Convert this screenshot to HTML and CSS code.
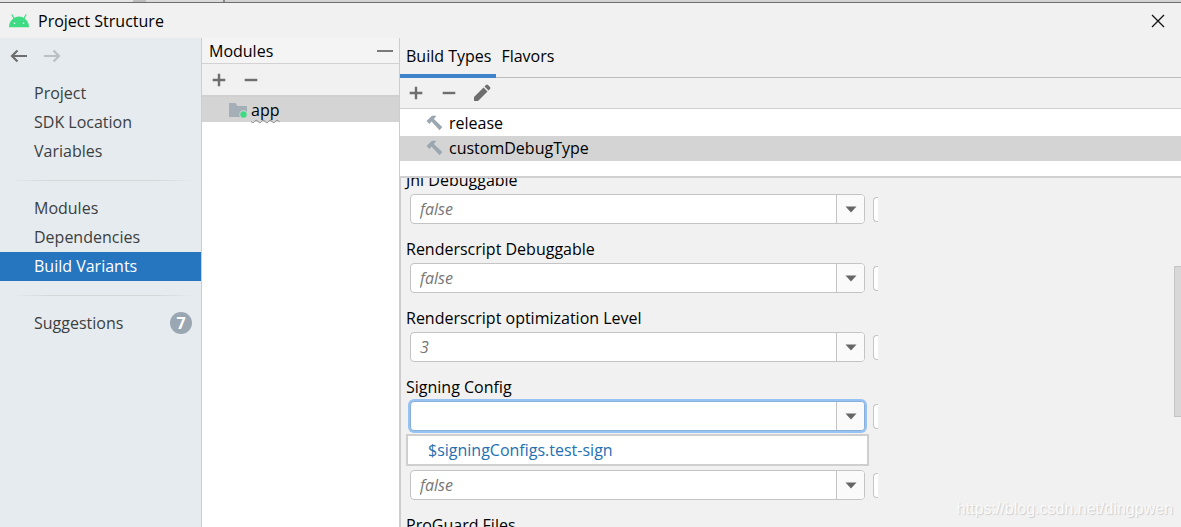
FILE: index.html
```html
<!DOCTYPE html>
<html lang="en">
<head>
<meta charset="utf-8">
<title>Project Structure</title>
<link rel="stylesheet" href="styles.css">
</head>
<body>
<div class="backdrop"></div>
<div class="dialog">
  <header class="titlebar">
    <svg class="logo" width="22" height="14" viewBox="0 0 22 14"><path d="M6 4.500 4 .8M16 4.500l2-3.700" stroke="#3ddc84" stroke-width="1.200" stroke-linecap="round"/><path d="M1 13.200C1 7.500 5.500 2.500 11 2.500S21 7.500 21 13.200z" fill="#3ddc84"/><circle cx="6.500" cy="9.200" r=".8" fill="#fff"/><circle cx="15.500" cy="9.200" r=".8" fill="#fff"/></svg>
    <h1 class="title">Project Structure</h1>
    <button class="icon-button close" aria-label="Close"><svg width="14" height="14" viewBox="0 0 14 14"><path d="M1 1l12 12M13 1 1 13" stroke="#111" stroke-width="1.300"/></svg></button>
  </header>
  <div class="content">
    <nav class="sidebar">
      <div class="history">
        <button class="icon-button" aria-label="Back"><svg width="18" height="14" viewBox="0 0 18 14"><path d="M17 7H2.500M7.500 1.500 2 7l5.500 5.500" fill="none" stroke="#6e6e6e" stroke-width="2.200"/></svg></button>
        <button class="icon-button" aria-label="Forward" disabled><svg width="18" height="14" viewBox="0 0 18 14"><path d="M1 7h14.500M10.500 1.500 16 7l-5.500 5.500" fill="none" stroke="#bcbfc1" stroke-width="2.200"/></svg></button>
      </div>
      <a class="nav-item" href="#project">Project</a>
      <a class="nav-item" href="#sdk">SDK Location</a>
      <a class="nav-item" href="#variables">Variables</a>
      <hr class="divider">
      <a class="nav-item" href="#modules">Modules</a>
      <a class="nav-item" href="#dependencies">Dependencies</a>
      <a class="nav-item selected" href="#variants">Build Variants</a>
      <hr class="divider">
      <a class="nav-item" href="#suggestions">Suggestions <span class="badge">7</span></a>
    </nav>
    <section class="modules">
      <header class="modules-header">
        <h2 class="panel-title">Modules</h2>
        <button class="icon-button" aria-label="Hide"><svg width="16" height="4" viewBox="0 0 16 4"><path d="M0 2h16" stroke="#7a7a7a" stroke-width="2"/></svg></button>
      </header>
      <div class="toolbar modules-toolbar">
        <button class="icon-button" aria-label="Add module"><svg width="14" height="14" viewBox="0 0 14 14"><path d="M7 .7v12.600M.7 7h12.600" stroke="#6e6e6e" stroke-width="2.400"/></svg></button>
        <button class="icon-button" aria-label="Remove module"><svg width="14" height="14" viewBox="0 0 14 14"><path d="M.7 7h12.600" stroke="#6e6e6e" stroke-width="2.400"/></svg></button>
      </div>
      <ul class="list module-list">
        <li class="row module-row selected-row">
          <svg width="20" height="16" viewBox="0 0 20 16"><path d="M1 1h6.500l2 3H19v11H1z" fill="#a4afb7"/><circle cx="15.500" cy="12.500" r="4.200" fill="#d4d4d4"/><circle cx="15.500" cy="12.500" r="3.200" fill="#3ddc84"/></svg>
          <span class="warned">app</span>
        </li>
      </ul>
    </section>
    <main class="variants">
      <div class="tabs" role="tablist">
        <button class="tab active" role="tab" aria-selected="true">Build Types</button>
        <button class="tab" role="tab" aria-selected="false">Flavors</button>
      </div>
      <div class="toolbar types-toolbar">
        <button class="icon-button" aria-label="Add"><svg width="14" height="14" viewBox="0 0 14 14"><path d="M7 .7v12.600M.7 7h12.600" stroke="#6e6e6e" stroke-width="2.400"/></svg></button>
        <button class="icon-button" aria-label="Remove"><svg width="14" height="14" viewBox="0 0 14 14"><path d="M.7 7h12.600" stroke="#6e6e6e" stroke-width="2.400"/></svg></button>
        <button class="icon-button" aria-label="Rename"><svg width="18" height="18" viewBox="0 0 18 18"><path d="M1 17v-4L10.500 3.500l4 4L5 17zM11.500 2.500l1.500-1.500q1-.8 2 0l2 2q.8 1 0 2l-1.500 1.500z" fill="#6e6e6e"/></svg></button>
      </div>
      <ul class="list type-list">
        <li class="row"><svg width="17" height="16" viewBox="0 0 17 16"><path d="M.5 6 6 .8h4.500L7.800 4l8.500 8-2.800 3.200L5.500 6.500 3.500 9z" fill="#9aa7b0"/></svg>release</li>
        <li class="row selected-row"><svg width="17" height="16" viewBox="0 0 17 16"><path d="M.5 6 6 .8h4.500L7.800 4l8.500 8-2.800 3.200L5.500 6.500 3.500 9z" fill="#9aa7b0"/></svg>customDebugType</li>
      </ul>
      <form class="properties">
        <div class="fields">
          <label class="field-label" for="jni">Jni Debuggable</label>
          <div class="field">
            <div class="combo"><input class="combo-input" id="jni" value="false"><button class="combo-button" type="button" aria-label="Open"><svg width="12" height="7" viewBox="0 0 12 7"><path d="M.5.5h11L6 6.500z" fill="#666"/></svg></button></div>
            <span class="clipped"></span>
          </div>
          <label class="field-label" for="rs">Renderscript Debuggable</label>
          <div class="field">
            <div class="combo"><input class="combo-input" id="rs" value="false"><button class="combo-button" type="button" aria-label="Open"><svg width="12" height="7" viewBox="0 0 12 7"><path d="M.5.5h11L6 6.500z" fill="#666"/></svg></button></div>
            <span class="clipped"></span>
          </div>
          <label class="field-label" for="level">Renderscript optimization Level</label>
          <div class="field">
            <div class="combo"><input class="combo-input" id="level" value="3"><button class="combo-button" type="button" aria-label="Open"><svg width="12" height="7" viewBox="0 0 12 7"><path d="M.5.5h11L6 6.500z" fill="#666"/></svg></button></div>
            <span class="clipped"></span>
          </div>
          <label class="field-label" for="signing">Signing Config</label>
          <div class="field with-popup">
            <div class="combo focused"><input class="combo-input" id="signing" value=""><button class="combo-button" type="button" aria-label="Open"><svg width="12" height="7" viewBox="0 0 12 7"><path d="M.5.5h11L6 6.500z" fill="#666"/></svg></button></div>
            <span class="clipped"></span>
          </div>
          <ul class="list popup" role="listbox"><li role="option">$signingConfigs.test-sign</li></ul>
          <div class="field">
            <div class="combo"><input class="combo-input" aria-label="Value" value="false"><button class="combo-button" type="button" aria-label="Open"><svg width="12" height="7" viewBox="0 0 12 7"><path d="M.5.5h11L6 6.500z" fill="#666"/></svg></button></div>
            <span class="clipped"></span>
          </div>
          <span class="field-label">ProGuard Files</span>
        </div>
        <div class="scroll-thumb"></div>
        <div class="watermark">https://blog.csdn.net/dingpwen</div>
      </form>
    </main>
  </div>
</div>
</body>
</html>
```
FILE: styles.css
```css
* { box-sizing: border-box; }
body {
  margin: 0;
  height: 100vh;
  display: flex;
  flex-direction: column;
  overflow: hidden;
  background: #f1f1f1;
  color: #000;
  font: 16px/24px "Open Sans", "Noto Sans", sans-serif;
}
button, input { font: inherit; color: inherit; }
svg { display: block; flex: none; }
.backdrop {
  flex: none;
  height: 2px;
  background: linear-gradient(90deg, #e4e4e4 133px, #bdbdbd 133px, #bdbdbd 146px, #dadada 146px, #dadada 223px, #8a8a8a 223px, #8a8a8a 225px, #d2d2d2 225px);
}
.dialog {
  flex: 1;
  min-height: 0;
  display: flex;
  flex-direction: column;
  border-top: 1px solid #6e6e6e;
}
.icon-button { padding: 0; border: 0; background: none; }
.titlebar {
  flex: none;
  height: 35px;
  display: flex;
  align-items: center;
  gap: 8px;
  padding: 0 16px 0 8px;
}
.title, .panel-title { margin: 0; font-size: 16px; font-weight: 400; }
.close { margin-left: auto; }
.content {
  flex: 1;
  min-height: 0;
  display: grid;
  grid-template-columns: 202px 198px minmax(0, 1fr);
}
.sidebar { background: #e6ebef; border-right: 1px solid #cbcdcf; }
.history { display: flex; gap: 15px; padding: 11px 0 0 10px; height: 41px; }
.history .icon-button { height: 14px; }
.nav-item {
  display: flex;
  align-items: center;
  justify-content: space-between;
  height: 29px;
  padding: 0 9px 1px 34px;
  color: #3c3f41;
  text-decoration: none;
}
.nav-item.selected { background: #2675bf; color: #fff; }
.divider {
  height: 1px;
  margin: 14px 6px 13px 10px;
  border: 0;
  background: linear-gradient(90deg, transparent, #d6d8d8 20%, #d6d8d8 80%, transparent);
}
.badge {
  width: 22px;
  height: 22px;
  border-radius: 50%;
  background: #9aa7b3;
  color: #fff;
  font-weight: 700;
  line-height: 22px;
  text-align: center;
}
.modules {
  display: flex;
  flex-direction: column;
  border-right: 1px solid #cdcdcd;
}
.modules-header {
  height: 26px;
  display: flex;
  align-items: center;
  justify-content: space-between;
  padding: 0 6px 0 7px;
  background: #f4f4f4;
  border-bottom: 1px solid #d2d2d2;
}
.toolbar { display: flex; align-items: center; }
.modules-toolbar { height: 33px; gap: 18px; padding-left: 10px; border-bottom: 2px solid #d0d0d0; }
.list { margin: 0; padding: 0; list-style: none; }
.module-list { flex: 1; background: #fff; }
.row { display: flex; align-items: center; gap: 6px; height: 25px; padding: 0 0 2px 26px; }
.module-row { gap: 3px; padding-bottom: 0; }
.selected-row { background: #d4d4d4; }
.warned { text-decoration: underline wavy #888 1px; text-underline-offset: 3px; text-decoration-skip-ink: none; }
.variants { display: flex; flex-direction: column; min-height: 0; }
.tabs { flex: none; display: flex; height: 40px; border-bottom: 1px solid #bdbdbd; }
.tab { height: 40px; padding: 0 6px 4px; border: 0; background: none; }
.tab.active { padding: 0 5px 0 6px; border-bottom: 4px solid #3d82cb; }
.tab + .tab { padding-left: 5px; }
.types-toolbar { flex: none; height: 31px; gap: 19px; padding-left: 9px; border-bottom: 1px solid #d0d0d0; }
.types-toolbar .icon-button:last-child { margin-left: -2px; }
.type-list { flex: none; height: 69px; padding-top: 2px; background: #fff; border-bottom: 2px solid #d0d0d0; }
.properties {
  position: relative;
  flex: 1;
  min-height: 0;
  overflow: hidden;
  border-left: 1px solid #cdcdcd;
}
.fields { width: 479px; max-width: 100%; margin-top: -8px; padding-left: 5px; }
.field-label { display: block; height: 24px; line-height: 20px; }
.field { display: flex; align-items: center; gap: 8px; margin: 0 2px 15px 4px; }
.combo {
  flex: 1;
  display: flex;
  height: 30px;
  border: 1px solid #c4c4c4;
  border-radius: 4px;
  background: #fff;
}
.combo.focused { border-color: #87afda; box-shadow: 0 0 0 2px #97c3f3; }
.combo-input {
  flex: 1;
  min-width: 0;
  padding: 0 9px;
  border: 0;
  outline: 0;
  background: none;
  color: #777;
  font-style: italic;
}
.combo-button {
  width: 28px;
  display: grid;
  place-items: center;
  padding: 0;
  border: 0;
  border-left: 1px solid #c4c4c4;
  border-radius: 0 3px 3px 0;
  background: #fafafa;
}
.clipped {
  width: 5px;
  height: 25px;
  border: 1px solid #c4c4c4;
  border-right: 0;
  border-radius: 4px 0 0 4px;
  background: #fff;
}
.with-popup { margin-bottom: 3px; }
.popup {
  height: 32px;
  margin: 0 11px 4px 0;
  padding: 2px 20px;
  border: 2px solid #cfcfcf;
  background: #fff;
  color: #2470b3;
}
.scroll-thumb {
  position: absolute;
  top: 88px;
  right: 0;
  width: 7px;
  height: 151px;
  background: #d8d8d8;
  border: 1px solid #c4c4c4;
  border-right: 0;
}
.watermark {
  position: absolute;
  right: 8px;
  bottom: 6px;
  color: #fafafa;
  font-family: "Liberation Sans", Arial, sans-serif;
  text-shadow: 1px 1px 1px #ccc;
}
```
